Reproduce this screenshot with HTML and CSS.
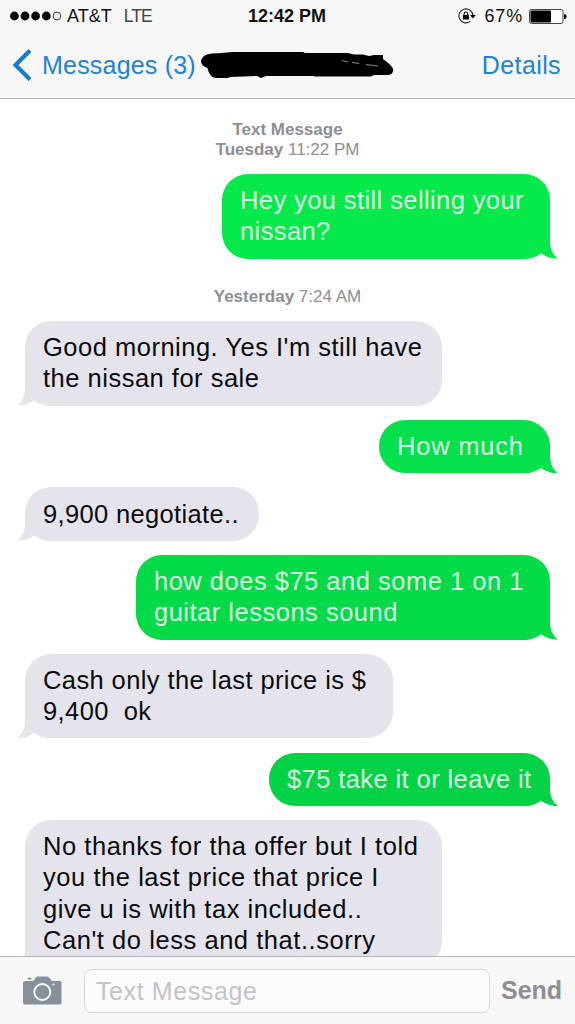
FILE: index.html
```html
<!DOCTYPE html>
<html lang="en">
<head>
    <meta charset="UTF-8">
    <meta name="viewport" content="width=device-width, initial-scale=1.0">
    <title>Messages</title>
    <link rel="stylesheet" href="styles.css">
</head>
<body>

    <div class="phone">
        <header class="header">
            <div class="status-bar">
                <div class="status-left">
                    <svg class="signal" width="52" height="10" viewBox="0 0 52 10">
                        <circle cx="4.4" cy="5" r="4.4"/>
                        <circle cx="15" cy="5" r="4.4"/>
                        <circle cx="25.6" cy="5" r="4.4"/>
                        <circle cx="36.3" cy="5" r="4.4"/>
                        <circle cx="47" cy="5" r="3.9" fill="none" stroke="#222" stroke-width="0.9"/>
                    </svg>
                    <span class="carrier">AT&amp;T</span>
                    <span class="network">LTE</span>
                </div>
                <span class="clock">12:42 PM</span>
                <div class="status-right">
                    <svg class="lock" width="18" height="16" viewBox="0 0 18 16">
                        <path d="M14.9 8A7 7 0 1 0 12.2 13.4" fill="none" stroke="#222" stroke-width="1.1"/>
                        <path d="M12 7H17.8L14.9 10.4Z"/>
                        <rect x="4.9" y="7" width="6" height="4.4" rx="0.6"/>
                        <path d="M6.1 7.2V5.8a1.8 1.8 0 0 1 3.6 0V7.2" fill="none" stroke="#111" stroke-width="1.1"/>
                    </svg>
                    <span class="percent">67%</span>
                    <svg class="battery" width="38" height="15" viewBox="0 0 38 15">
                        <rect x="0.5" y="0.5" width="33.5" height="14" rx="2" fill="#fff" stroke="#444"/>
                        <rect x="1.5" y="1.5" width="20.5" height="12" rx="1"/>
                        <path d="M35 5a2.6 2.6 0 0 1 0 5.2Z"/>
                    </svg>
                </div>
            </div>
            <nav class="nav-bar">
                <a class="back">
                    <svg width="20" height="32" viewBox="0 0 20 32">
                        <path d="M19 1.5L4.5 16L19 30.5" fill="none" stroke="#1b7bcf" stroke-width="4.2"/>
                    </svg>
                    <span>Messages (3)</span>
                </a>
                <svg class="scribble" width="194" height="30" viewBox="0 0 194 30">
                    <path d="M7 4.5Q13 3 19 3.3L32 2H103L105 3H148L154 4.5H163L169 6L174 5H183V9Q193 16 193.3 20Q193 24 189 25H174L171 26.5H115L113 26H66L61 28L57 26L30 27L28 28H15Q9 26 7.500 18Q1 16 1 11Q2 6 7 4.5Z"/>
                    <path d="M142 10.5L148 12M152 12.5L159 13.5M166 14.5L178 16" stroke="#aaa" stroke-width="0.8"/>
                </svg>
                <a class="details">Details</a>
            </nav>
        </header>

        <main class="chat">
            <p class="stamp"><b>Text Message</b><br><b>Tuesday</b> 11:22 PM</p>
            <div class="bubble sent hey">Hey you still selling your<br>nissan?</div>
            <p class="stamp stamp-day"><b>Yesterday</b> 7:24 AM</p>
            <div class="bubble received morning">Good morning. Yes I'm still have<br>the nissan for sale</div>
            <div class="bubble sent how-much">How much</div>
            <div class="bubble received negotiate">9,900 negotiate..</div>
            <div class="bubble sent lessons">how does $75 and some 1 on 1<br>guitar lessons sound</div>
            <div class="bubble received cash">Cash only the last price is $<br>9,400&nbsp; ok</div>
            <div class="bubble sent take-it">$75 take it or leave it</div>
            <div class="bubble received no-thanks">No thanks for tha offer but I told<br>you the last price that price I<br>give u is with tax included..<br>Can't do less and that..sorry</div>
        </main>

        <footer class="compose">
            <svg class="camera" width="39" height="30" viewBox="0 0 39 30">
                <path d="M2 6H9.5C11.5 6 12 1.5 15 1.5H24C27 1.5 27.5 6 29.5 6H36.5Q38.5 6 38.5 8V27.5Q38.5 29.5 36.5 29.5H2Q0 29.5 0 27.5V8Q0 6 2 6Z" fill="#87909b"/>
                <rect x="4.5" y="2.8" width="4" height="1.6" rx="0.8" fill="#87909b"/>
                <circle cx="19.3" cy="17" r="8" fill="none" stroke="#fff" stroke-width="1.8"/>
                <circle cx="30.3" cy="9.5" r="1.1" fill="#fff"/>
            </svg>
            <div class="field">Text Message</div>
            <span class="send">Send</span>
        </footer>
    </div>

</body>
</html>
```
FILE: styles.css
```css
body {
    margin: 0;
    background-color: #fff;
    font-family: "Liberation Sans", Arial, sans-serif;
}

.phone {
    display: flex;
    flex-direction: column;
    width: 575px;
    height: 1024px;
    overflow: hidden;
}

/* header */
.header {
    height: 98px;
    flex: none;
    background-color: #f7f7f7;
    border-bottom: 1px solid #b5b5b7;
}

.status-bar {
    display: grid;
    grid-template-columns: 1fr auto 1fr;
    align-items: center;
    height: 32px;
    padding: 0 8px 0 10px;
    font-size: 18px;
    color: #111;
}

.status-left,
.status-right {
    display: flex;
    align-items: center;
}

.status-right {
    justify-content: flex-end;
}

.carrier {
    margin-left: 5px;
}

.network {
    margin-left: 12px;
    font-size: 17.5px;
    letter-spacing: -0.9px;
    color: #444;
}

.clock {
    margin-right: 3px;
    font-weight: bold;
}

.percent {
    margin: 0 6px 0 9px;
    letter-spacing: 0.8px;
}

.nav-bar {
    display: flex;
    align-items: center;
    height: 66px;
    padding: 0 14px 0 11px;
    font-size: 25px;
    color: #2382d2;
}

.back {
    display: flex;
    align-items: center;
    gap: 11px;
    letter-spacing: 0.2px;
}

.scribble {
    margin-left: 4px;
}

.details {
    margin-left: auto;
    letter-spacing: 0.4px;
}

/* conversation */
.chat {
    display: flex;
    flex-direction: column;
    flex: 1;
    min-height: 0;
    overflow: hidden;
    padding: 21px 25px 0;
}

.stamp {
    margin: 0 0 14.5px;
    text-align: center;
    font-size: 17px;
    line-height: 19.8px;
    color: #8e8e93;
}

.stamp-day {
    margin: 28.5px 0 14px;
}

.bubble {
    position: relative;
    z-index: 0;
    flex: none;
    box-sizing: border-box;
    margin-bottom: 14.2px;
    padding: 11.2px 18px;
    border-radius: 26px;
    font-size: 25.5px;
    line-height: 31.1px;
    letter-spacing: 0.5px;
    white-space: nowrap;
}

.sent {
    align-self: flex-end;
    color: #dcfee5;
}

.received {
    align-self: flex-start;
    background-color: #e5e4ec;
    color: #0a0a0c;
}

/* the tail sits behind the text and covers the rounded corner */
.bubble::after {
    content: "";
    position: absolute;
    z-index: -1;
    right: -8px;
    bottom: 0;
    width: 34px;
    height: 27px;
    background-color: inherit;
    clip-path: path("M0 0H26V11C26.5 18 29 23.5 34 27C27 27 21 25 17 21.5C12 25.5 6 27 0 27Z");
}

.received::after {
    right: auto;
    left: -8px;
    transform: scaleX(-1);
}

/* newer messages are a darker green */
.hey {
    width: 328px;
    margin-bottom: 0;
    background-color: #05e94b;
    letter-spacing: 0.4px;
}

.morning {
    width: 417px;
}

.how-much {
    width: 171px;
    background-color: #04e14a;
    letter-spacing: 0.8px;
}

.negotiate {
    width: 234px;
    letter-spacing: 0.35px;
}

.lessons {
    width: 414px;
    background-color: #03da48;
}

.cash {
    width: 368px;
    letter-spacing: 0.4px;
}

.take-it {
    width: 281px;
    background-color: #03d247;
    letter-spacing: 0.4px;
}

.no-thanks {
    width: 417px;
    letter-spacing: 0.55px;
}

/* compose bar */
.compose {
    display: flex;
    align-items: center;
    flex: none;
    box-sizing: border-box;
    height: 68px;
    padding: 0 12px 0 23px;
    background-color: #f7f7f7;
    border-top: 1px solid #b5b5b7;
}

.camera {
    margin-bottom: 2px;
}

.field {
    box-sizing: border-box;
    width: 406px;
    height: 44px;
    margin-left: 22px;
    padding-left: 11px;
    border: 1.5px solid #d8d8da;
    border-radius: 8px;
    background-color: #fbfbfb;
    font-size: 25px;
    line-height: 42px;
    letter-spacing: 0.6px;
    color: #c3c3c7;
}

.send {
    margin-left: 11px;
    font-size: 25px;
    font-weight: bold;
    color: #8e8e93;
}
```
